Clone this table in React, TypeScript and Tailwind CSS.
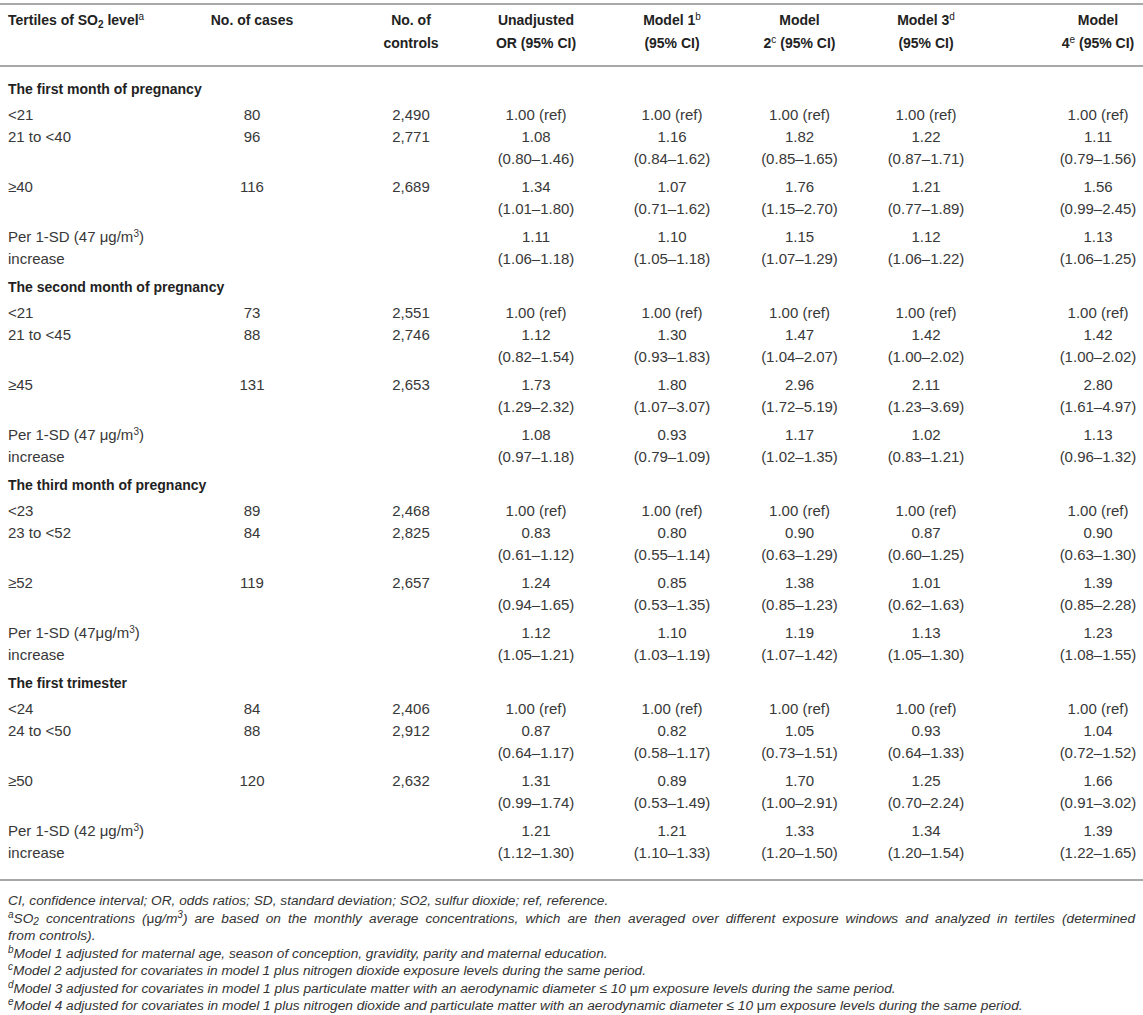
import React from "react";

type Row = {
  label: React.ReactNode;
  cases?: string;
  controls?: string;
  values: string[][];
};

type Section = {
  title: string;
  rows: Row[];
};

const REF = [["1.00 (ref)"], ["1.00 (ref)"], ["1.00 (ref)"], ["1.00 (ref)"], ["1.00 (ref)"]];

const ug = (n: string, space = true) => (
  <>
    Per 1-SD ({n}
    {space ? " " : ""}μg/m<sup className="text-[10px]">3</sup>)
    <br />
    increase
  </>
);

const split = (s: string) => {
  const i = s.indexOf(" ");
  return [s.slice(0, i), s.slice(i + 1)];
};

const vals = (...items: string[]) => items.map(split);

const sections: Section[] = [
  {
    title: "The first month of pregnancy",
    rows: [
      { label: "<21", cases: "80", controls: "2,490", values: REF },
      {
        label: "21 to <40",
        cases: "96",
        controls: "2,771",
        values: vals("1.08 (0.80–1.46)", "1.16 (0.84–1.62)", "1.82 (0.85–1.65)", "1.22 (0.87–1.71)", "1.11 (0.79–1.56)"),
      },
      {
        label: "≥40",
        cases: "116",
        controls: "2,689",
        values: vals("1.34 (1.01–1.80)", "1.07 (0.71–1.62)", "1.76 (1.15–2.70)", "1.21 (0.77–1.89)", "1.56 (0.99–2.45)"),
      },
      {
        label: ug("47"),
        values: vals("1.11 (1.06–1.18)", "1.10 (1.05–1.18)", "1.15 (1.07–1.29)", "1.12 (1.06–1.22)", "1.13 (1.06–1.25)"),
      },
    ],
  },
  {
    title: "The second month of pregnancy",
    rows: [
      { label: "<21", cases: "73", controls: "2,551", values: REF },
      {
        label: "21 to <45",
        cases: "88",
        controls: "2,746",
        values: vals("1.12 (0.82–1.54)", "1.30 (0.93–1.83)", "1.47 (1.04–2.07)", "1.42 (1.00–2.02)", "1.42 (1.00–2.02)"),
      },
      {
        label: "≥45",
        cases: "131",
        controls: "2,653",
        values: vals("1.73 (1.29–2.32)", "1.80 (1.07–3.07)", "2.96 (1.72–5.19)", "2.11 (1.23–3.69)", "2.80 (1.61–4.97)"),
      },
      {
        label: ug("47"),
        values: vals("1.08 (0.97–1.18)", "0.93 (0.79–1.09)", "1.17 (1.02–1.35)", "1.02 (0.83–1.21)", "1.13 (0.96–1.32)"),
      },
    ],
  },
  {
    title: "The third month of pregnancy",
    rows: [
      { label: "<23", cases: "89", controls: "2,468", values: REF },
      {
        label: "23 to <52",
        cases: "84",
        controls: "2,825",
        values: vals("0.83 (0.61–1.12)", "0.80 (0.55–1.14)", "0.90 (0.63–1.29)", "0.87 (0.60–1.25)", "0.90 (0.63–1.30)"),
      },
      {
        label: "≥52",
        cases: "119",
        controls: "2,657",
        values: vals("1.24 (0.94–1.65)", "0.85 (0.53–1.35)", "1.38 (0.85–1.23)", "1.01 (0.62–1.63)", "1.39 (0.85–2.28)"),
      },
      {
        label: ug("47", false),
        values: vals("1.12 (1.05–1.21)", "1.10 (1.03–1.19)", "1.19 (1.07–1.42)", "1.13 (1.05–1.30)", "1.23 (1.08–1.55)"),
      },
    ],
  },
  {
    title: "The first trimester",
    rows: [
      { label: "<24", cases: "84", controls: "2,406", values: REF },
      {
        label: "24 to <50",
        cases: "88",
        controls: "2,912",
        values: vals("0.87 (0.64–1.17)", "0.82 (0.58–1.17)", "1.05 (0.73–1.51)", "0.93 (0.64–1.33)", "1.04 (0.72–1.52)"),
      },
      {
        label: "≥50",
        cases: "120",
        controls: "2,632",
        values: vals("1.31 (0.99–1.74)", "0.89 (0.53–1.49)", "1.70 (1.00–2.91)", "1.25 (0.70–2.24)", "1.66 (0.91–3.02)"),
      },
      {
        label: ug("42"),
        values: vals("1.21 (1.12–1.30)", "1.21 (1.10–1.33)", "1.33 (1.20–1.50)", "1.34 (1.20–1.54)", "1.39 (1.22–1.65)"),
      },
    ],
  },
];

// column boxes: width + padding so each text centre lands where the table has it
const col = [
  "w-[172px] pl-2 text-left",
  "w-[160px] text-center",
  "w-[142px] pl-[16px] text-center",
  "w-[130px] pr-[6px] text-center",
  "w-[132px] pl-[4px] text-center",
  "w-[127px] text-center",
  "w-[149px] pr-[23px] text-center",
  "w-[131px] pl-[41px] text-center",
];

function Sup({ children }: { children: React.ReactNode }) {
  return <sup className="text-[10px] font-normal">{children}</sup>;
}

function DataRow({ row }: { row: Row }) {
  const double = row.values[0].length > 1;
  return (
    <div className={`flex ${double ? "pb-[6px]" : ""}`}>
      <div className={col[0]}>{row.label}</div>
      <div className={col[1]}>{row.cases}</div>
      <div className={col[2]}>{row.controls}</div>
      {row.values.map((v, i) => (
        <div key={i} className={col[i + 3]}>
          {v.map((line, j) => (
            <div key={j}>{line}</div>
          ))}
        </div>
      ))}
    </div>
  );
}

export default function App() {
  return (
    <div
      className="w-[1143px] bg-white pt-[3px] text-[15px] text-[#383838]"
      style={{ fontFamily: '"Liberation Sans", Arial, sans-serif' }}
    >
      <div className="border-t-2 border-[#a8a8a8]" />

      {/* header */}
      <div className="flex pt-[4px] pb-[10px] text-[14px] font-bold leading-[23px] text-[#222]">
        <div className={col[0]}>
          Tertiles of SO<sub className="text-[10px]">2</sub> level<Sup>a</Sup>
        </div>
        <div className={col[1]}>No. of cases</div>
        <div className={col[2]}>
          No. of
          <br />
          controls
        </div>
        <div className={col[3]}>
          Unadjusted
          <br />
          OR (95% CI)
        </div>
        <div className={col[4]}>
          Model 1<Sup>b</Sup>
          <br />
          (95% CI)
        </div>
        <div className={col[5]}>
          Model
          <br />
          2<Sup>c</Sup> (95% CI)
        </div>
        <div className={col[6]}>
          Model 3<Sup>d</Sup>
          <br />
          (95% CI)
        </div>
        <div className={col[7]}>
          Model
          <br />
          4<Sup>e</Sup> (95% CI)
        </div>
      </div>

      <div className="border-t-2 border-[#a8a8a8]" />

      {/* body */}
      <div className="pt-[11px] pb-[9px] leading-[22px]">
        {sections.map((s) => (
          <div key={s.title}>
            <div className="pb-1 pl-2 text-[14px] font-bold text-[#222]">{s.title}</div>
            {s.rows.map((r, i) => (
              <DataRow key={i} row={r} />
            ))}
          </div>
        ))}
      </div>

      <div className="border-t-2 border-[#a8a8a8]" />

      {/* footnotes */}
      <div className="px-2 pt-[11px] text-[13.7px] italic leading-[17.5px] text-[#333]">
        <p>CI, confidence interval; OR, odds ratios; SD, standard deviation; SO2, sulfur dioxide; ref, reference.</p>
        <p>
          <span className="block text-justify [text-align-last:justify]">
            <Sup>a</Sup>SO<sub className="text-[10px]">2</sub> concentrations (<span className="not-italic">μ</span>g/m
            <sup className="text-[10px]">3</sup>) are based on the monthly average concentrations, which are then
            averaged over different exposure windows and analyzed in tertiles (determined
          </span>
          <span className="block">from controls).</span>
        </p>
        <p>
          <Sup>b</Sup>Model 1 adjusted for maternal age, season of conception, gravidity, parity and maternal education.
        </p>
        <p>
          <Sup>c</Sup>Model 2 adjusted for covariates in model 1 plus nitrogen dioxide exposure levels during the same
          period.
        </p>
        <p>
          <Sup>d</Sup>Model 3 adjusted for covariates in model 1 plus particulate matter with an aerodynamic diameter ≤ 10{" "}
          <span className="not-italic">μ</span>m exposure levels during the same period.
        </p>
        <p>
          <Sup>e</Sup>Model 4 adjusted for covariates in model 1 plus nitrogen dioxide and particulate matter with an
          aerodynamic diameter ≤ 10 <span className="not-italic">μ</span>m exposure levels during the same period.
        </p>
      </div>
    </div>
  );
}
